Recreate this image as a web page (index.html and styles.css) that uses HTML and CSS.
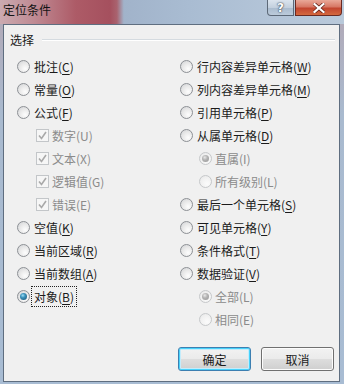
FILE: index.html
```html
<!DOCTYPE html>
<html lang="zh-CN">
<head>
  <meta charset="UTF-8" />
  <title>定位条件</title>
  <link rel="stylesheet" href="styles.css">
</head>
<body>
  <div class="window">
    <div class="titlebar">
      <div class="title">定位条件</div>
      <div class="caption-btns">
        <div class="cap-btn help">?</div>
        <div class="cap-btn close">
          <svg width="12" height="10" viewBox="0 0 12 10"><path d="M1.5 1 L10.5 9 M10.5 1 L1.5 9" stroke="#5a1b12" stroke-width="3.6" stroke-linecap="square"/><path d="M1.5 1 L10.5 9 M10.5 1 L1.5 9" stroke="#fff" stroke-width="2.2" stroke-linecap="square"/></svg>
        </div>
      </div>
    </div>

    <div class="client">
      <div class="group-head">
        <span>选择</span>
        <div class="group-line"></div>
      </div>

      <div class="columns">
        <div class="col left">
          <div class="row"><span class="radio"></span><span>批注(<u>C</u>)</span></div>
          <div class="row"><span class="radio"></span><span>常量(<u>O</u>)</span></div>
          <div class="row"><span class="radio"></span><span>公式(<u>F</u>)</span></div>
          <div class="row sub-check off"><span class="check"><svg width="9" height="9" viewBox="0 0 9 9"><path d="M1 4.5 L3.5 7.5 L8 1" fill="none" stroke="#a9a9a9" stroke-width="1.6"/></svg></span><span>数字(U)</span></div>
          <div class="row sub-check off"><span class="check"><svg width="9" height="9" viewBox="0 0 9 9"><path d="M1 4.5 L3.5 7.5 L8 1" fill="none" stroke="#a9a9a9" stroke-width="1.6"/></svg></span><span>文本(X)</span></div>
          <div class="row sub-check off"><span class="check"><svg width="9" height="9" viewBox="0 0 9 9"><path d="M1 4.5 L3.5 7.5 L8 1" fill="none" stroke="#a9a9a9" stroke-width="1.6"/></svg></span><span>逻辑值(G)</span></div>
          <div class="row sub-check off"><span class="check"><svg width="9" height="9" viewBox="0 0 9 9"><path d="M1 4.5 L3.5 7.5 L8 1" fill="none" stroke="#a9a9a9" stroke-width="1.6"/></svg></span><span>错误(E)</span></div>
          <div class="row"><span class="radio"></span><span>空值(<u>K</u>)</span></div>
          <div class="row"><span class="radio"></span><span>当前区域(<u>R</u>)</span></div>
          <div class="row"><span class="radio"></span><span>当前数组(<u>A</u>)</span></div>
          <div class="row"><span class="radio checked"></span><span class="focus">对象(<u>B</u>)</span></div>
        </div>

        <div class="col right">
          <div class="row"><span class="radio"></span><span>行内容差异单元格(<u>W</u>)</span></div>
          <div class="row"><span class="radio"></span><span>列内容差异单元格(<u>M</u>)</span></div>
          <div class="row"><span class="radio"></span><span>引用单元格(<u>P</u>)</span></div>
          <div class="row"><span class="radio"></span><span>从属单元格(<u>D</u>)</span></div>
          <div class="row sub-radio off"><span class="radio checked"></span><span>直属(I)</span></div>
          <div class="row sub-radio off"><span class="radio"></span><span>所有级别(L)</span></div>
          <div class="row"><span class="radio"></span><span>最后一个单元格(<u>S</u>)</span></div>
          <div class="row"><span class="radio"></span><span>可见单元格(<u>Y</u>)</span></div>
          <div class="row"><span class="radio"></span><span>条件格式(<u>T</u>)</span></div>
          <div class="row"><span class="radio"></span><span>数据验证(<u>V</u>)</span></div>
          <div class="row sub-radio off"><span class="radio checked"></span><span>全部(L)</span></div>
          <div class="row sub-radio off"><span class="radio"></span><span>相同(E)</span></div>
        </div>
      </div>

      <div class="buttons">
        <button class="btn default">确定</button>
        <button class="btn">取消</button>
      </div>
    </div>
  </div>
</body>
</html>
```

FILE: styles.css
```css
html, body {
  margin: 0;
  padding: 0;
}
body {
  font-family: "Noto Sans CJK SC", "Noto Sans", sans-serif;
  font-size: 12px;
  color: #1b1b1b;
}
.window {
  width: 344px;
  height: 384px;
  background: linear-gradient(to bottom, #b3a7b4 0, #a9bacf 30%, #a8bcd3 100%);
  display: flex;
  flex-direction: column;
}
.titlebar {
  height: 24px;
  display: flex;
  justify-content: space-between;
  background: linear-gradient(to right, #cbaab0 0, #bf8a93 10%, #ad5b67 22%, #a5505e 32%, #a9636f 34%, #a1b3ca 36%, #a9bcd2 55%, #b4c5d8 80%, #b9c9da 100%);
}
.title {
  padding: 2px 0 0 3px;
  line-height: 16px;
  color: #141414;
}
.caption-btns {
  display: flex;
  gap: 1px;
  margin-right: 2px;
  height: 16px;
}
.cap-btn {
  height: 16px;
  box-sizing: border-box;
  display: flex;
  align-items: center;
  justify-content: center;
}
.help {
  width: 27px;
  border: 1px solid #5d6978;
  border-top: none;
  border-bottom-left-radius: 4px;
  background: linear-gradient(to bottom, #dbe4ee 0, #c3d0de 50%, #a9bbce 51%, #bccbdb 100%);
  color: #fff;
  font-family: "DejaVu Sans", sans-serif;
  font-weight: bold;
  font-size: 12px;
  text-shadow: 0 0 2px #2c3744, 0 0 1px #2c3744;
}
.close {
  width: 47px;
  border: 1px solid #6a2a22;
  border-top: none;
  border-bottom-right-radius: 4px;
  background: linear-gradient(to bottom, #e9a898 0, #d77865 45%, #c2452f 55%, #d4693f 100%);
}
.client {
  height: 358px;
  box-sizing: border-box;
  margin: 0 4px 0 3px;
  border: 1px solid #5f6e80;
  background: #f0f0f0;
  display: flex;
  flex-direction: column;
}
.group-head {
  height: 16px;
  margin-top: 7px;
  padding-left: 6px;
  margin-right: 4px;
  display: flex;
  align-items: center;
  gap: 8px;
  line-height: 16px;
}
.group-line {
  flex: 1;
  height: 1px;
  background: #d5dbe0;
  border-bottom: 1px solid #fff;
}
.columns {
  display: flex;
  margin-top: 7px;
  padding-left: 13px;
  height: 276px;
}
.col.left {
  width: 163px;
}
.col.right {
  flex: 1;
}
.row {
  height: 23px;
  display: flex;
  align-items: center;
  gap: 4px;
  line-height: 15px;
  white-space: nowrap;
}
.row u {
  text-decoration-thickness: 1px;
  text-underline-offset: 2px;
}
.row.off {
  color: #8b8b8b;
}
.sub-check {
  padding-left: 19px;
  gap: 3px;
}
.sub-radio {
  padding-left: 19px;
  gap: 3px;
}
.radio {
  width: 13px;
  height: 13px;
  box-sizing: border-box;
  border-radius: 50%;
  border: 1px solid #8d9095;
  background: radial-gradient(circle at 65% 70%, #fdfdfd 0, #e9e9e9 50%, #cfd1d4 100%);
  position: relative;
  flex: none;
}
.radio.checked::after {
  content: '';
  position: absolute;
  left: 2px;
  top: 2px;
  width: 7px;
  height: 7px;
  border-radius: 50%;
  background: radial-gradient(circle at 40% 35%, #9fe0f6 0, #3d93bd 35%, #174f6e 100%);
}
.off .radio {
  border-color: #c6c8ca;
  background: radial-gradient(circle at 65% 70%, #fbfbfb 0, #f0f0f0 60%, #e2e3e4 100%);
}
.off .radio.checked::after {
  background: radial-gradient(circle at 40% 35%, #e8e8e8 0, #b4b4b4 40%, #959595 100%);
}
.check {
  width: 13px;
  height: 13px;
  box-sizing: border-box;
  border: 1px solid #c3c6c9;
  background: #f6f6f6;
  display: flex;
  align-items: center;
  justify-content: center;
  flex: none;
}
.check svg {
  display: block;
}
.focus {
  outline: 1px dotted #222;
  outline-offset: 2px;
}
.buttons {
  margin-top: 16px;
  padding-right: 5px;
  display: flex;
  justify-content: flex-end;
  gap: 10px;
}
.btn {
  width: 73px;
  height: 24px;
  box-sizing: border-box;
  font-family: inherit;
  font-size: 12px;
  color: #1b1b1b;
  border: 1px solid #707070;
  border-radius: 3px;
  background: linear-gradient(to bottom, #f2f2f2 0, #ebebeb 48%, #dddddd 52%, #cfcfcf 100%);
  box-shadow: inset 0 0 0 1px #fcfcfc;
  padding: 0;
}
.btn.default {
  border-color: #3c7fb1;
  box-shadow: inset 0 0 0 1px #48d2fb, inset 0 0 0 2px #c4ecfb;
}
```
